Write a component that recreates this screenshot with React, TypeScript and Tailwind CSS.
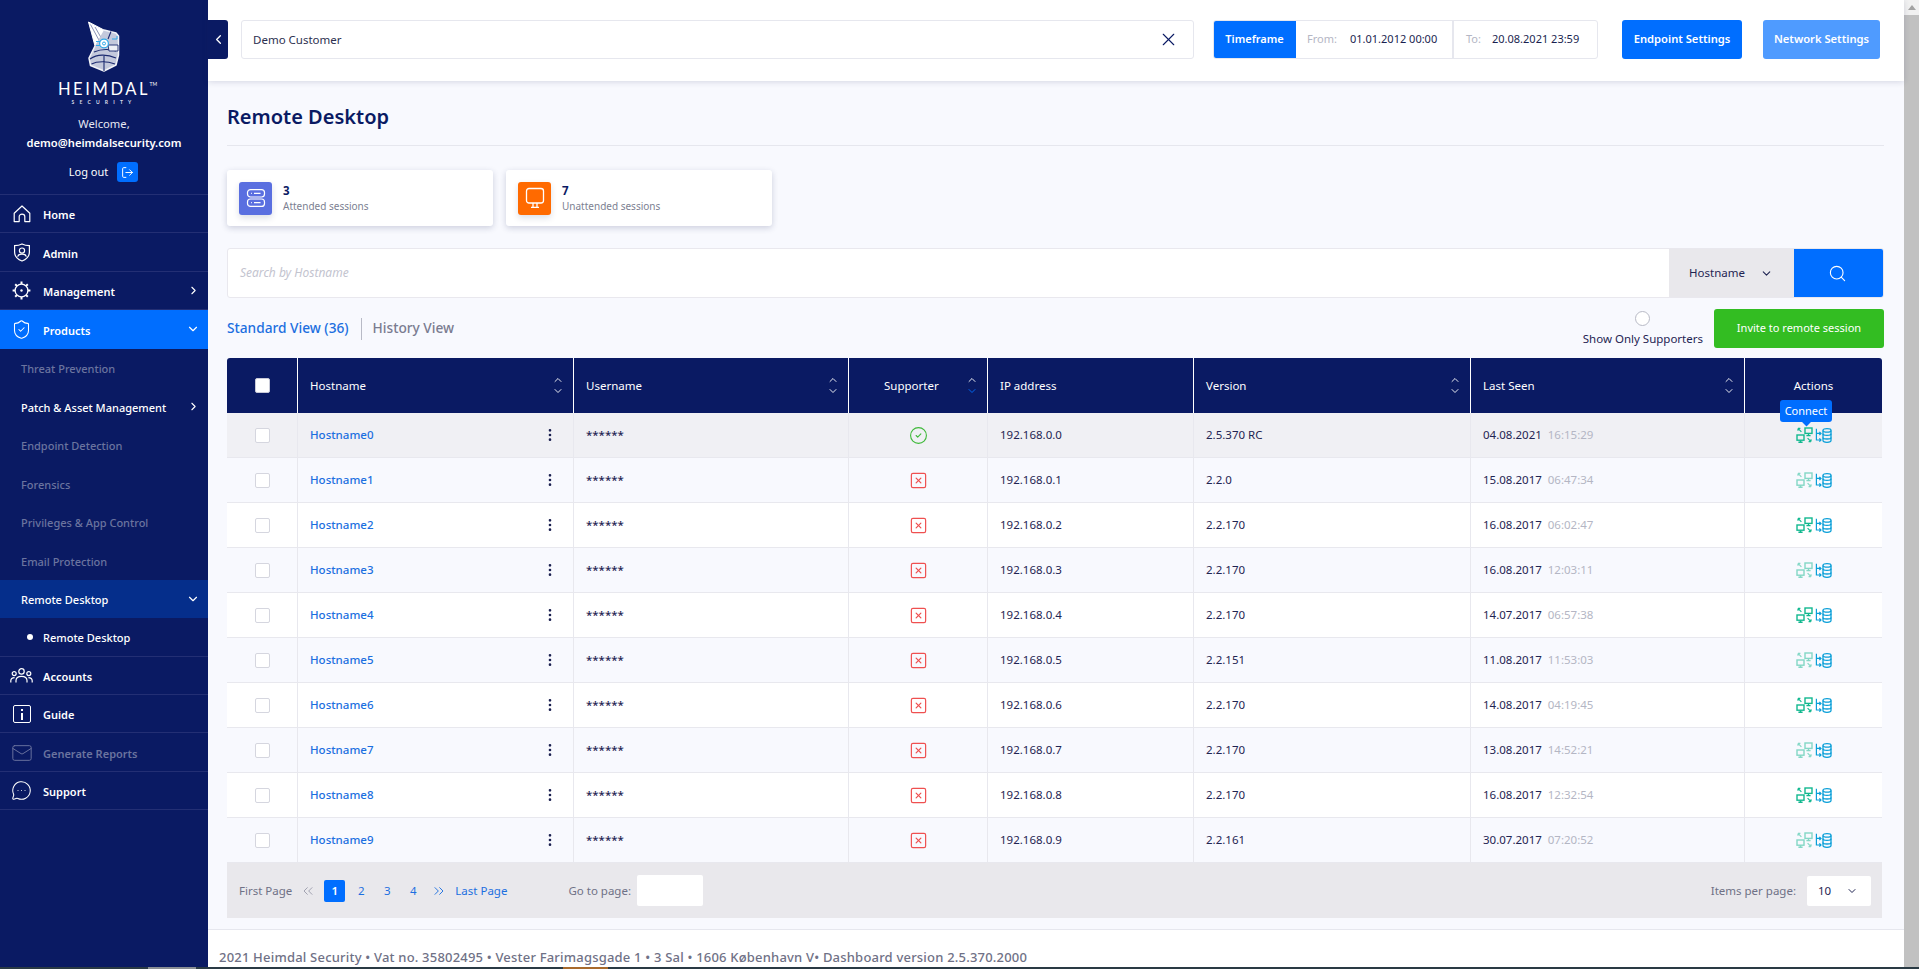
import React from "react";
import {
  ShieldCheck,
  Mail,
  MessageCircleMore,
  LogOut,
  ChevronRight,
  ChevronDown,
  ChevronLeft,
  ChevronUp,
  X,
  Search,
  ChevronsLeft,
  ChevronsRight,
  CircleCheck,
  SquareX,
  EllipsisVertical,
} from "lucide-react";

const HomeIcon = () => (
  <svg width="18" height="18" viewBox="0 0 18 18" fill="none" stroke="currentColor" strokeWidth="1.2" strokeLinejoin="round">
    <path d="M1.2 8.2 L9 1 L16.8 8.2 V16.6 H11.8 V11.6 C11.8 10.2 10.6 9.2 9 9.2 C7.4 9.2 6.2 10.2 6.2 11.6 V16.6 H1.2 Z" />
  </svg>
);

const GearIcon = () => (
  <svg width="19" height="19" viewBox="0 0 19 19" fill="none" stroke="currentColor" strokeWidth="1.3">
    <circle cx="9.5" cy="9.5" r="6.4" />
    <circle cx="9.5" cy="9.5" r="1.2" fill="currentColor" stroke="none" />
    <path d="M9.5 .6 V3 M9.5 16 V18.4 M.6 9.5 H3 M16 9.5 H18.4 M3.2 3.2 L4.9 4.9 M14.1 14.1 L15.8 15.8 M15.8 3.2 L14.1 4.9 M4.9 14.1 L3.2 15.8" strokeWidth="2" />
  </svg>
);

const AdminIcon = () => (
  <svg width="18" height="19" viewBox="0 0 18 19" fill="none" stroke="currentColor" strokeWidth="1.2">
    <path d="M9 1 C11.5 2.2 14 2.6 16.4 2.6 V9 C16.4 13.4 13.4 16.4 9 18 C4.6 16.4 1.6 13.4 1.6 9 V2.6 C4 2.6 6.5 2.2 9 1 Z" />
    <circle cx="9" cy="7.6" r="2.6" />
    <path d="M4.6 13.6 C5.2 11.8 6.6 11.2 9 11.2 C11.4 11.2 12.8 11.8 13.4 13.6" />
  </svg>
);

const AccountsIcon = () => (
  <svg width="23" height="16" viewBox="0 0 23 16" fill="none" stroke="currentColor" strokeWidth="1.2">
    <circle cx="11.5" cy="3.4" r="2.7" />
    <circle cx="4.2" cy="5.6" r="2" />
    <circle cx="18.8" cy="5.6" r="2" />
    <path d="M6 14.5 V12.6 C6 10 8.4 8.4 11.5 8.4 C14.6 8.4 17 10 17 12.6 V14.5" />
    <path d="M.8 14.5 V12.8 C.8 10.8 2.2 9.6 4.6 9.6" />
    <path d="M22.2 14.5 V12.8 C22.2 10.8 20.8 9.6 18.4 9.6" />
  </svg>
);

const GuideIcon = () => (
  <span className="flex h-[18px] w-[18px] items-center justify-center rounded-[2px] border border-white">
    <svg width="4" height="11" viewBox="0 0 4 11" fill="currentColor">
      <rect x="1" y="0" width="2" height="2" />
      <rect x="1" y="4" width="2" height="7" />
    </svg>
  </span>
);

const ServerIcon = () => (
  <svg width="20" height="20" viewBox="0 0 20 20" fill="none" stroke="currentColor" strokeWidth="1.2">
    <rect x="1.5" y="1.6" width="17" height="7.4" rx="3" />
    <rect x="1.5" y="11" width="17" height="7.4" rx="3" />
    <path d="M5 5.3 H5.8 M8 5.3 H14.5 M5 14.7 H5.8 M8 14.7 H14.5" />
  </svg>
);

const ScreenIcon = () => (
  <svg width="20" height="22" viewBox="0 0 20 22" fill="none" stroke="currentColor" strokeWidth="1.3">
    <rect x="1.5" y="1.5" width="17" height="14.5" rx="2.5" />
    <path d="M8 16 V20 M12 16 V20 M6 20.4 H14" />
  </svg>
);

const HelmetLogo = () => (
  <svg width="34" height="52" viewBox="0 0 34 52" fill="none" strokeLinejoin="round">
    <path d="M1.5 1 L17 9 L19 20 L12 24 L8 25 L4.5 12 Z" fill="#ffffff" stroke="#ffffff" strokeWidth="1" />
    <path d="M3.5 3.5 L13 21 M8 6 L16 20" stroke="#8b94b5" strokeWidth="1" />
    <path
      d="M17 9 L29 12 L31.5 15 L31.5 34 L29 44 L17 50 L3.5 44.5 L2 37 L6 29 L8 25"
      fill="#c4c9dc"
      stroke="#f2f3f8"
      strokeWidth="1.5"
    />
    <path d="M3 38 C10 33 20 33 29 37 M4.5 43 C10 40 20 40 28 43 M7 31 C14 28 22 28 29 30 M17 34 L17 50 M24 10.5 L21 18" stroke="#1c2a70" strokeWidth="1.1" />
    <path d="M21 24 H31 V30 H22 Z" fill="#eef0f6" stroke="#1c2a70" strokeWidth=".9" />
    <circle cx="17" cy="22.5" r="4.4" fill="#ffffff" stroke="#2fa8e8" strokeWidth="1.2" />
    <circle cx="17" cy="22.5" r="1.5" stroke="#2fa8e8" strokeWidth="1" />
    <path d="M9 20.5 H13 M9 24.5 H13 M25 18 H30 V15" stroke="#2fa8e8" strokeWidth="1" />
  </svg>
);

const ConnectIcon = ({ light }: { light: boolean }) => (
  <svg width="17" height="16" viewBox="0 0 17 16" fill="none" stroke="#12b88f" strokeWidth="1.4" opacity={light ? 0.5 : 1}>
    <rect x="9" y="1" width="7" height="5.4" />
    <path d="M12.5 6.4 V8.6 M10.4 8.6 H14.6" />
    <rect x="1" y="8" width="7" height="5.2" />
    <path d="M4.5 13.2 V15.2 M2.4 15.2 H6.6" />
    <path d="M2 1.4 L5.4 4.8 M2 1.4 H4.4 M2 1.4 V3.8" strokeWidth="1.2" />
    <path d="M15 14.6 L11.6 11.2 M15 14.6 H12.6 M15 14.6 V12.2" strokeWidth="1.2" />
  </svg>
);

const DatabaseIcon = () => (
  <svg width="17" height="15" viewBox="0 0 17 15" fill="none" stroke="#0a9fd8" strokeWidth="1.3">
    <ellipse cx="12" cy="2.4" rx="4" ry="1.7" />
    <path d="M8 2.4 V12.6 C8 13.6 9.8 14.3 12 14.3 C14.2 14.3 16 13.6 16 12.6 V2.4" />
    <path d="M8 5.8 C8 6.8 9.8 7.4 12 7.4 C14.2 7.4 16 6.8 16 5.8 M8 9.4 C8 10.4 9.8 11 12 11 C14.2 11 16 10.4 16 9.4" />
    <path d="M1.4 .8 V12 H6 M1.4 5.4 H6 M4.4 3.8 L6 5.4 L4.4 7 M4.4 10.4 L6 12 L4.4 13.6" strokeWidth="1.2" />
  </svg>
);

const SortArrows = ({ active }: { active?: boolean }) => (
  <span className="flex flex-col items-center">
    <ChevronUp size={12} strokeWidth={1.8} className="-mb-[1px] text-white" />
    <ChevronDown size={12} strokeWidth={1.8} className={active ? "text-[#006eff]" : "text-white"} />
  </span>
);

const NavRow = ({
  icon,
  label,
  dim,
  chevron,
}: {
  icon: React.ReactNode;
  label: string;
  dim?: boolean;
  chevron?: boolean;
}) => (
  <div className={`flex h-[38.4px] items-center border-b border-[#232f74] ${dim ? "text-[#6b749f]" : "text-white"}`}>
    <span className="flex w-[43px] shrink-0 items-center justify-center pt-[1px]">{icon}</span>
    <span className="pt-[4px] text-[11px] font-semibold">{label}</span>
    {chevron && <ChevronRight size={13} className="ml-auto mr-[8px] text-white" />}
  </div>
);

const SubRow = ({ label, dim, chevron }: { label: string; dim?: boolean; chevron?: boolean }) => (
  <div className={`flex h-[38.5px] items-center pl-[21px] text-[11px] font-medium ${dim ? "text-[#6b749f]" : "text-white"}`}>
    <span className="pt-[3px]">{label}</span>
    {chevron && <ChevronRight size={13} className="ml-auto mr-[8px] text-white" />}
  </div>
);

const Sidebar = () => (
  <aside className="flex w-[208px] shrink-0 flex-col bg-[#0a1a63] text-white">
    <div className="flex h-[195px] flex-col items-center border-b border-[#232f74] pt-[21px]">
      <HelmetLogo />
      <div className="relative mt-[7px] text-[16.5px] font-normal leading-[18px] tracking-[2.6px] font-['Lato',sans-serif]">
        HEIMDAL
        <span className="absolute -right-[7px] top-[1px] text-[5px] leading-[6px] tracking-normal">TM</span>
      </div>
      <div className="mt-[1px] text-[5px] font-bold leading-[7px] tracking-[5.2px] text-[#d8dbe8] font-['Lato',sans-serif]">SECURITY</div>
      <div className="mt-[10px] text-[11.2px] leading-[16px] text-[#e6e8f2]">Welcome,</div>
      <div className="mt-[3px] text-[11.2px] font-semibold leading-[16px]">demo@heimdalsecurity.com</div>
      <div className="mt-[11px] flex items-center gap-[9px] pr-[1px]">
        <span className="text-[11px]">Log out</span>
        <span className="flex h-[20px] w-[21px] items-center justify-center rounded-[3px] bg-[#006eff]">
          <LogOut size={13} strokeWidth={1.8} />
        </span>
      </div>
    </div>

    <NavRow icon={<HomeIcon />} label="Home" />
    <NavRow icon={<AdminIcon />} label="Admin" />
    <NavRow icon={<GearIcon />} label="Management" chevron />
    <div className="flex h-[38.4px] items-center bg-[#006eff]">
      <span className="flex w-[43px] shrink-0 items-center justify-center pt-[1px]">
        <ShieldCheck size={21} strokeWidth={1.2} />
      </span>
      <span className="pt-[3px] text-[11px] font-semibold">Products</span>
      <ChevronDown size={14} className="ml-auto mr-[8px]" />
    </div>
    <SubRow label="Threat Prevention" dim />
    <SubRow label="Patch & Asset Management" chevron />
    <SubRow label="Endpoint Detection" dim />
    <SubRow label="Forensics" dim />
    <SubRow label="Privileges & App Control" dim />
    <SubRow label="Email Protection" dim />
    <div className="flex h-[38.6px] items-center bg-[#052e8b] pl-[21px] text-[11px] font-medium">
      <span className="pt-[2px]">Remote Desktop</span>
      <ChevronDown size={14} className="ml-auto mr-[8px]" />
    </div>
    <div className="flex h-[38.4px] items-center border-b border-[#232f74] text-[11px] font-medium">
      <span className="flex w-[43px] shrink-0 pl-[27px] pt-[1px]">
        <span className="h-[6px] w-[6px] shrink-0 rounded-full bg-white" />
      </span>
      <span className="pt-[3px]">Remote Desktop</span>
    </div>
    <NavRow icon={<AccountsIcon />} label="Accounts" />
    <NavRow icon={<GuideIcon />} label="Guide" />
    <NavRow icon={<Mail size={22} strokeWidth={1.05} />} label="Generate Reports" dim />
    <NavRow icon={<MessageCircleMore size={21} strokeWidth={1.2} />} label="Support" />
  </aside>
);

const TopBar = () => (
  <header className="relative flex h-[81px] shrink-0 items-start bg-white pt-[20px] shadow-[0_1px_6px_rgba(30,40,90,0.16)]">
    <button className="flex h-[39px] w-[20px] items-center justify-center rounded-r-[3px] bg-[#0a1a63] text-white">
      <ChevronLeft size={15} strokeWidth={2} />
    </button>
    <div className="ml-[13px] flex h-[39px] w-[953px] items-center justify-between rounded-[3px] border border-[#e6e7ee] pl-[11px] pr-[14px]">
      <span className="text-[11.5px] text-[#2c3050]">Demo Customer</span>
      <X size={21} strokeWidth={1.3} className="text-[#0a1a63]" />
    </div>
    <div className="ml-[19px] flex h-[39px] w-[385px] overflow-hidden rounded-[3px] border border-[#e6e7ee] text-[11px]">
      <div className="-m-[1px] flex w-[83px] items-center justify-center bg-[#006eff] font-semibold text-white">Timeframe</div>
      <div className="flex w-[159px] items-center border-r-2 border-[#e6e7ee] pl-[12px]">
        <span className="w-[43px] text-[#b4b6c4]">From:</span>
        <span className="text-[#1a1f50]">01.01.2012 00:00</span>
      </div>
      <div className="flex items-center pl-[12px]">
        <span className="w-[26px] text-[#b4b6c4]">To:</span>
        <span className="text-[#1a1f50]">20.08.2021 23:59</span>
      </div>
    </div>
    <button className="ml-[24px] h-[39px] w-[120px] rounded-[3px] bg-[#006eff] text-[11.2px] font-semibold text-white">Endpoint Settings</button>
    <button className="ml-[21px] h-[39px] w-[117px] rounded-[3px] bg-[#4f9bff] text-[11.2px] font-semibold text-white">Network Settings</button>
  </header>
);

const StatCard = ({ icon, color, value, label }: { icon: React.ReactNode; color: string; value: string; label: string }) => (
  <div className="flex h-[56px] w-[266px] items-center rounded-[3px] bg-white pl-[12px] shadow-[0_2px_6px_rgba(30,40,90,0.2)]">
    <span className={`flex h-[33px] w-[33px] items-center justify-center rounded-[3px] text-white shadow-[0_3px_6px_rgba(30,40,90,0.15)] ${color}`}>{icon}</span>
    <div className="ml-[11px]">
      <div className="text-[11.5px] font-bold leading-[15px] text-[#0a1a63]">{value}</div>
      <div className="mt-[1px] text-[10px] leading-[15px] text-[#7c7f92]">{label}</div>
    </div>
  </div>
);

const rows = [
  { version: "2.5.370 RC", date: "04.08.2021", time: "16:15:29" },
  { version: "2.2.0", date: "15.08.2017", time: "06:47:34" },
  { version: "2.2.170", date: "16.08.2017", time: "06:02:47" },
  { version: "2.2.170", date: "16.08.2017", time: "12:03:11" },
  { version: "2.2.170", date: "14.07.2017", time: "06:57:38" },
  { version: "2.2.151", date: "11.08.2017", time: "11:53:03" },
  { version: "2.2.170", date: "14.08.2017", time: "04:19:45" },
  { version: "2.2.170", date: "13.08.2017", time: "14:52:21" },
  { version: "2.2.170", date: "16.08.2017", time: "12:32:54" },
  { version: "2.2.161", date: "30.07.2017", time: "07:20:52" },
];

const gridCols = "grid grid-cols-[70px_276px_275px_139px_206px_277px_274px_138px]";
const headBase = "flex items-center border-l border-white";
const bodyBase = "flex items-center border-l border-[#e8e8ee]";

const HeadCell = ({ label }: { label: string }) => (
  <div className={`${headBase} justify-between pl-[12px] pr-[9px]`}>
    {label}
    <SortArrows />
  </div>
);

const HostTable = () => (
  <div className="mt-[10px] w-[1655px] text-[11.5px]">
    <div className={`${gridCols} h-[55px] rounded-t-[3px] bg-[#0a1a63] text-white`}>
      <div className="flex items-center justify-center">
        <span className="h-[15px] w-[15px] rounded-[2px] border border-[#c8cad8] bg-white" />
      </div>
      <HeadCell label="Hostname" />
      <HeadCell label="Username" />
      <div className={`${headBase} justify-between pl-[35px] pr-[9px]`}>
        Supporter
        <SortArrows active />
      </div>
      <div className={`${headBase} pl-[12px]`}>IP address</div>
      <HeadCell label="Version" />
      <HeadCell label="Last Seen" />
      <div className={`${headBase} justify-center`}>Actions</div>
    </div>
    {rows.map((row, i) => (
      <div
        key={i}
        className={`${gridCols} relative h-[45px] border-b border-[#e8e8ee] text-[#1f2452] ${i === 0 ? "bg-[#f0f0f4]" : i % 2 === 1 ? "bg-[#f8f9fe]" : "bg-white"}`}
      >
        <div className="flex items-center justify-center">
          <span className="h-[15px] w-[15px] rounded-[2px] border border-[#d5d6df] bg-white" />
        </div>
        <div className={`${bodyBase} justify-between pl-[12px] pr-[15px]`}>
          <span className="font-medium text-[#1c6fe0]">Hostname{i}</span>
          <EllipsisVertical size={16} strokeWidth={2} className="text-[#1a1f50]" />
        </div>
        <div className={`${bodyBase} pl-[12px] font-medium`}>******</div>
        <div className={`${bodyBase} justify-center`}>
          {i === 0 ? (
            <CircleCheck size={19} strokeWidth={1.4} className="text-[#3fb93a]" />
          ) : (
            <SquareX size={19} strokeWidth={1.5} className="text-[#ef5050]" />
          )}
        </div>
        <div className={`${bodyBase} pl-[12px]`}>192.168.0.{i}</div>
        <div className={`${bodyBase} pl-[12px]`}>{row.version}</div>
        <div className={`${bodyBase} pl-[12px]`}>
          {row.date}
          <span className="ml-[6px] text-[#b4b6c4]">{row.time}</span>
        </div>
        <div className={`${bodyBase} relative justify-center gap-[2px]`}>
          <ConnectIcon light={i % 2 === 1} />
          <DatabaseIcon />
          {i === 0 && (
            <div className="absolute -top-[13px] left-[35px] flex h-[22px] w-[52px] items-center justify-center rounded-[3px] bg-[#006eff] text-[11px] text-white">
              Connect
              <span className="absolute -bottom-[3px] left-[23px] h-[7px] w-[7px] rotate-45 bg-[#006eff]" />
            </div>
          )}
        </div>
      </div>
    ))}
    <div className="flex h-[55px] items-center bg-[#e9e8ec] pl-[12px] pr-[11px] text-[11.5px] text-[#6f7186]">
      <span>First Page</span>
      <ChevronsLeft size={16} strokeWidth={1.2} className="ml-[8px] text-[#8f91a2]" />
      <span className="ml-[8px] flex h-[22px] w-[21px] items-center justify-center rounded-[2px] bg-[#006eff] font-semibold text-white">1</span>
      <span className="ml-[9px] w-[14px] text-center text-[#1c6fe0]">2</span>
      <span className="ml-[12px] w-[14px] text-center text-[#1c6fe0]">3</span>
      <span className="ml-[12px] w-[14px] text-center text-[#1c6fe0]">4</span>
      <ChevronsRight size={16} strokeWidth={1.4} className="ml-[11px] text-[#1c6fe0]" />
      <span className="ml-[8px] text-[#1c6fe0]">Last Page</span>
      <span className="ml-[61px]">Go to page:</span>
      <span className="ml-[6px] h-[31px] w-[66px] rounded-[2px] bg-white" />
      <span className="ml-auto">Items per page:</span>
      <span className="ml-[11px] flex h-[30px] w-[64px] items-center justify-between rounded-[2px] bg-white pl-[11px] pr-[13px] text-[#1f2452]">
        10
        <ChevronDown size={12} strokeWidth={2} />
      </span>
    </div>
  </div>
);

const Content = () => (
  <div className="min-h-0 flex-1 pl-[19px]">
    <div className="flex h-[65px] w-[1657px] items-center border-b border-[#e6e7ee]">
      <h1 className="pt-[7px] text-[20px] font-semibold text-[#0a1a63]">Remote Desktop</h1>
    </div>
    <div className="mt-[24px] flex gap-[13px]">
      <StatCard icon={<ServerIcon />} color="bg-[#5a6fe0]" value="3" label="Attended sessions" />
      <StatCard icon={<ScreenIcon />} color="bg-[#ff6a00]" value="7" label="Unattended sessions" />
    </div>
    <div className="mt-[22px] flex h-[50px] w-[1657px] items-center overflow-hidden rounded-[3px] border border-[#e9e8ee] bg-white">
      <span className="ml-[12px] flex-1 text-[12px] italic text-[#c3c4cf]">Search by Hostname</span>
      <div className="flex h-full w-[125px] items-center bg-[#e9e8ec] pl-[20px] text-[11.5px] text-[#1f2452]">
        Hostname
        <ChevronDown size={13} strokeWidth={2} className="ml-[15px]" />
      </div>
      <div className="flex h-full w-[89px] items-center justify-center bg-[#006eff] pr-[2px] text-white">
        <Search size={19} strokeWidth={1.4} />
      </div>
    </div>
    <div className="mt-[11px] flex h-[39px] w-[1657px] items-center">
      <span className="text-[13.7px] font-medium text-[#1c6fe0]">Standard View (36)</span>
      <span className="ml-[12px] h-[22px] w-px bg-[#b8bac6]" />
      <span className="ml-[11px] text-[13.7px] font-medium text-[#7a7c90]">History View</span>
      <div className="ml-auto flex flex-col items-center">
        <span className="h-[15px] w-[15px] rounded-full border border-[#b8bac6] bg-white" />
        <span className="mt-[5px] text-[11.5px] leading-[16px] text-[#1f2452]">Show Only Supporters</span>
      </div>
      <button className="ml-[11px] h-[39px] w-[170px] rounded-[3px] bg-[#33bd22] text-[11px] text-white">Invite to remote session</button>
    </div>
    <HostTable />
  </div>
);

const Footer = () => (
  <footer className="h-[38px] shrink-0 border-t border-[#e6e7ee] bg-white pl-[11px] pt-[17px] text-[13px] font-medium leading-[20px] tracking-[0.2px] text-[#6f7186]">
    2021 Heimdal Security • Vat no. 35802495 • Vester Farimagsgade 1 • 3 Sal • 1606 København V• Dashboard version 2.5.370.2000
  </footer>
);

const Scrollbar = () => (
  <div className="flex w-[15px] shrink-0 flex-col bg-[#f1f1f1]">
    <div className="flex h-[15px] items-center justify-center">
      <span className="h-0 w-0 border-x-[4px] border-b-[5px] border-x-transparent border-b-[#a3a3a3]" />
    </div>
    <div className="flex-1 bg-[#c1c1c1]" />
  </div>
);

export default function App() {
  return (
    <div className="h-[969px] w-[1919px] overflow-hidden bg-[#2a3a44] font-['Noto_Sans','Open_Sans',sans-serif]">
      <div className="flex h-[967px]">
        <Sidebar />
        <main className="flex min-w-0 flex-1 flex-col bg-[#f8f9fe]">
          <TopBar />
          <Content />
          <Footer />
        </main>
        <Scrollbar />
      </div>
      <div className="flex h-[2px]">
        <span className="ml-[148px] w-[48px] bg-[#8a8f94]" />
        <span className="ml-[367px] w-[45px] bg-[#a86a2c]" />
      </div>
    </div>
  );
}
